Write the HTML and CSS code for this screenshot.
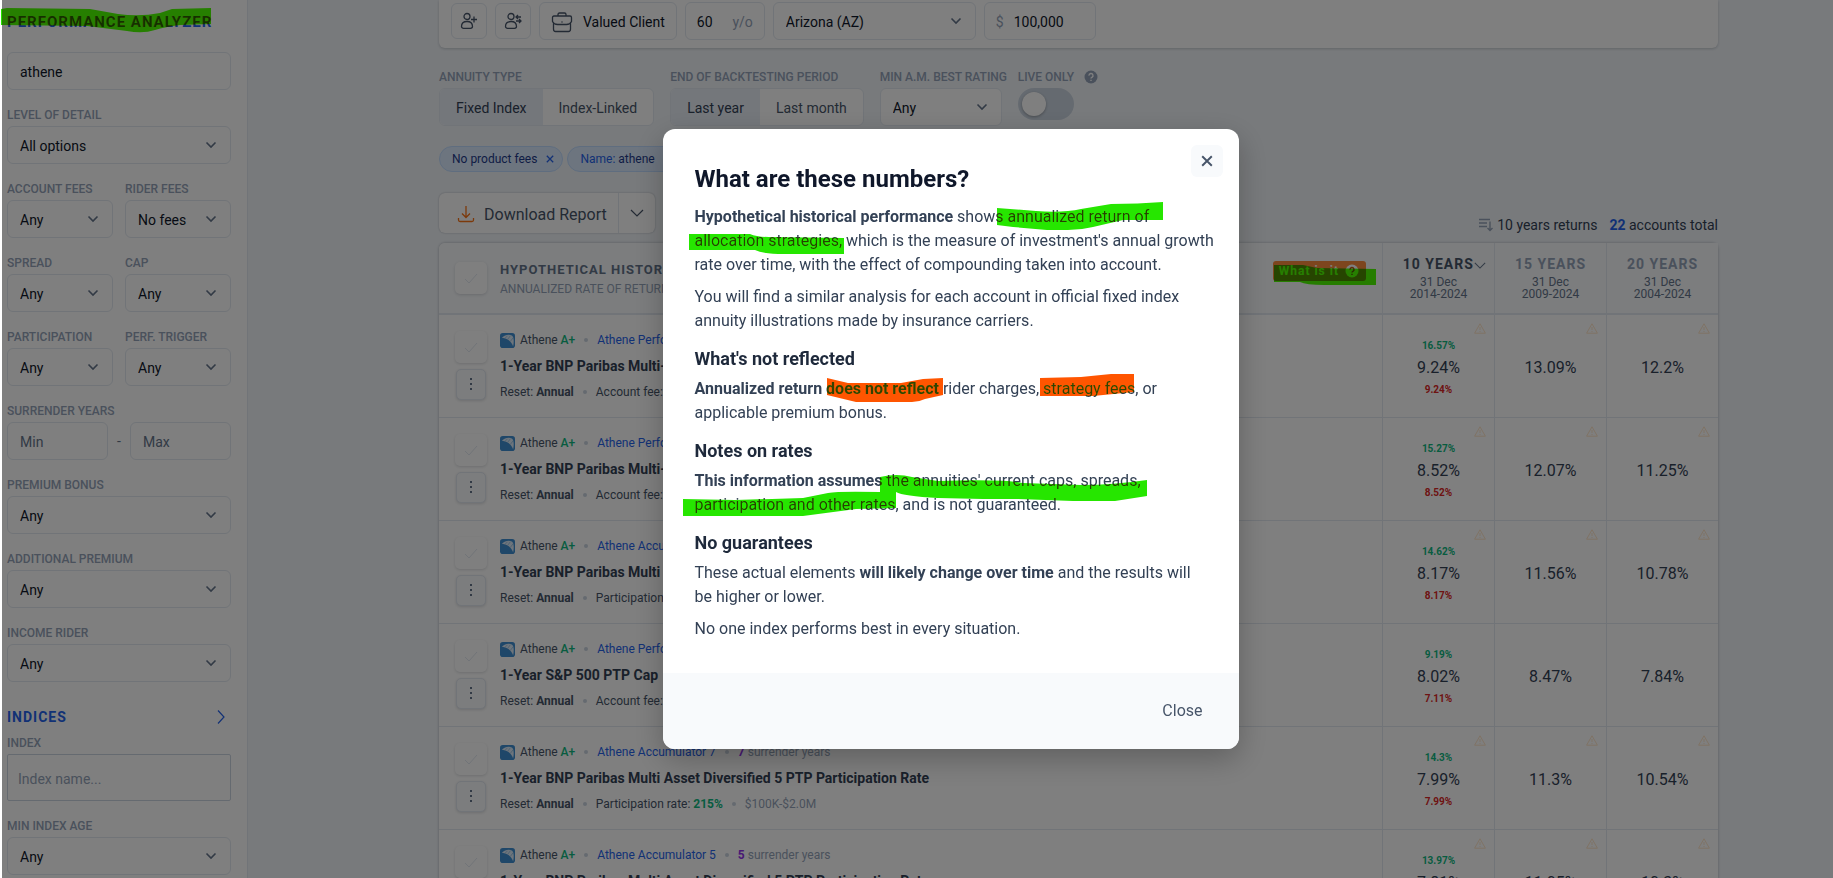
FILE: index.html
```
<!DOCTYPE html>
<html lang="en">
<head>
    <meta charset="UTF-8">
    <meta name="viewport" content="width=device-width, initial-scale=1.0">
    <title>Performance Analyzer</title>
    <link rel="stylesheet" href="styles.css">
</head>
<body>
    <svg class="sprite" aria-hidden="true">
        <symbol id="i-check" viewBox="0 0 16 16"><path d="M2 9l4 4 8-9" fill="none" stroke="currentColor"/></symbol>
        <symbol id="i-dots" viewBox="0 0 16 16"><rect x="7" y="1" width="2" height="2"/><rect x="7" y="6" width="2" height="2"/><rect x="7" y="11" width="2" height="2"/></symbol>
        <symbol id="i-x" viewBox="0 0 10 10"><path d="M1 1l8 8M9 1l-8 8" fill="none" stroke="currentColor" stroke-width="1.6"/></symbol>
        <symbol id="i-down" viewBox="0 0 14 8"><path d="M1 1l6 6 6-6" fill="none" stroke="currentColor" stroke-width="1.2"/></symbol>
        <symbol id="i-help" viewBox="0 0 14 14"><circle cx="7" cy="7" r="6.5" fill="currentColor"/><path class="help-mark" d="M5 5.6a2 2 0 1 1 2.9 1.700c-.6.3-.9.6-.9 1.200M7 9.800v1.200" fill="none" stroke-width="1.4"/></symbol>
        <symbol id="i-warn" viewBox="0 0 12 11"><path d="M6 .8L11.4 10.2H.6zM6 4v3M6 8v1" fill="none" stroke="currentColor" stroke-width=".9" stroke-linejoin="round"/></symbol>
        <symbol id="i-athene" viewBox="0 0 16 16"><rect width="16" height="16" rx="3" fill="#3f8fd2"/><path d="M2 5c3-3 8-4 11-2 2 2 2 7 1 11-2-5-5-8-12-9z" fill="#dcebf8"/><path d="M5 6l3-3M8 7l3-4M11 9l3-4" stroke="#7fb2de" stroke-width=".7"/></symbol>
    </svg>

    <div class="page">
        <aside class="sidebar">
            <h1>Performance Analyzer</h1>
            <div class="fields">
                <input type="text" value="athene" aria-label="Search">
                <div class="field">
                    <label for="detail">Level of detail</label>
                    <select id="detail"><option>All options</option></select>
                </div>
                <div class="pair">
                    <div class="field">
                        <label for="account-fees">Account fees</label>
                        <select id="account-fees"><option>Any</option></select>
                    </div>
                    <div class="field">
                        <label for="rider-fees">Rider fees</label>
                        <select id="rider-fees"><option>No fees</option></select>
                    </div>
                </div>
                <div class="pair">
                    <div class="field">
                        <label for="spread">Spread</label>
                        <select id="spread"><option>Any</option></select>
                    </div>
                    <div class="field">
                        <label for="cap">Cap</label>
                        <select id="cap"><option>Any</option></select>
                    </div>
                </div>
                <div class="pair">
                    <div class="field">
                        <label for="participation">Participation</label>
                        <select id="participation"><option>Any</option></select>
                    </div>
                    <div class="field">
                        <label for="trigger">Perf. trigger</label>
                        <select id="trigger"><option>Any</option></select>
                    </div>
                </div>
                <div class="field">
                    <label for="years-min">Surrender years</label>
                    <div class="range">
                        <input type="text" id="years-min" placeholder="Min">
                        <span>-</span>
                        <input type="text" id="years-max" placeholder="Max" aria-label="Max surrender years">
                    </div>
                </div>
                <div class="field">
                    <label for="bonus">Premium bonus</label>
                    <select id="bonus"><option>Any</option></select>
                </div>
                <div class="field">
                    <label for="additional">Additional premium</label>
                    <select id="additional"><option>Any</option></select>
                </div>
                <div class="field">
                    <label for="income">Income rider</label>
                    <select id="income"><option>Any</option></select>
                </div>
            </div>
            <h2>Indices
                <svg width="8" height="14" viewBox="0 0 8 14"><path d="M1 0.5l6 6.500-6 6.500" fill="none" stroke="currentColor" stroke-width="1.2"/></svg>
            </h2>
            <div class="fields">
                <div class="field">
                    <label for="index-name">Index</label>
                    <input type="text" id="index-name" class="index-name" placeholder="Index name...">
                </div>
                <div class="field">
                    <label for="index-age">Min index age</label>
                    <select id="index-age"><option>Any</option></select>
                </div>
            </div>
        </aside>

        <main>
            <section class="client">
                <button class="icon-btn" aria-label="Add client">
                    <svg width="18" height="18" viewBox="0 0 18 18" fill="none" stroke="currentColor" stroke-width="1.3"><circle cx="7" cy="4.500" r="3"/><path d="M1.500 14.500c0-3 2.200-5 5.500-5s5.500 2 5.500 5c0 1-1 1.800-2 1.800h-7c-1 0-2-.8-2-1.800zM14 4.500v6M11 7.500h6"/></svg>
                </button>
                <button class="icon-btn" aria-label="Switch client">
                    <svg width="18" height="18" viewBox="0 0 18 18" fill="none" stroke="currentColor" stroke-width="1.3"><circle cx="7" cy="4.500" r="3"/><path d="M1.500 14.500c0-3 2.200-5 5.500-5s5.500 2 5.500 5c0 1-1 1.800-2 1.800h-7c-1 0-2-.8-2-1.800zM17 5h-5M14 3l-2 2 2 2M12 9h5M15 7l2 2-2 2"/></svg>
                </button>
                <button class="name-btn">
                    <svg width="22" height="22" viewBox="0 0 22 22" fill="none" stroke="currentColor" stroke-width="1.300"><path d="M7 5V3.500C7 2.500 7.500 2 8.500 2h5c1 0 1.500.5 1.500 1.500V5M3 5h16c1 0 1.500.5 1.500 1.500v4c-1 2-3 3-5 3h-9c-2 0-4-1-5-3v-4C1.500 5.500 2 5 3 5zM2.500 12.500V18c0 1.500.5 2.500 2 2.500h13c1.500 0 2-1 2-2.500v-5.500M10.500 11h1"/></svg>
                    Valued Client
                </button>
                <label class="box age"><input type="text" value="60" aria-label="Age"><span>y/o</span></label>
                <select class="state" aria-label="State"><option>Arizona (AZ)</option></select>
                <label class="box amount"><span>$</span><input type="text" value="100,000" aria-label="Premium"></label>
            </section>

            <section class="filters">
                <div class="field">
                    <span class="label">Annuity type</span>
                    <div class="segment"><button class="on">Fixed Index</button><button>Index-Linked</button></div>
                </div>
                <div class="field">
                    <span class="label">End of backtesting period</span>
                    <div class="segment"><button class="on">Last year</button><button>Last month</button></div>
                </div>
                <div class="field rating">
                    <label for="rating">Min A.M. best rating</label>
                    <select id="rating"><option>Any</option></select>
                </div>
                <div class="field">
                    <label for="live" class="live-label">Live only <svg width="14" height="14"><use href="#i-help"/></svg></label>
                    <input type="checkbox" id="live" class="toggle">
                </div>
            </section>

            <section class="chips">
                <button>No product fees <svg width="8" height="8"><use href="#i-x"/></svg></button>
                <button><span><span class="key">Name:</span> athene</span> <svg width="8" height="8"><use href="#i-x"/></svg></button>
            </section>

            <section class="toolbar">
                <div class="download">
                    <button><svg width="18" height="18" viewBox="0 0 18 18" fill="none" stroke="currentColor" stroke-width="1.300"><path d="M9 1v11M5 8.500l4 4 4-4M1.500 13v2c0 1 .5 1.500 1.500 1.500h12c1 0 1.500-.5 1.500-1.500v-2"/></svg>Download Report</button>
                    <button aria-label="More formats"><svg width="14" height="8"><use href="#i-down"/></svg></button>
                </div>
                <div class="summary">
                    <span class="sorted"><svg width="14" height="14" viewBox="0 0 14 14" fill="none" stroke="currentColor" stroke-width="1.400"><path d="M0 1.500h11M0 5h8M0 8.500h8M11 3.500v9M8.500 10l2.500 2.500 2.500-2.500"/></svg>10 years returns</span>
                    <span><b>22</b> accounts total</span>
                </div>
            </section>

            <table>
                <thead>
                    <tr>
                        <th class="account">
                            <div class="head">
                                <button class="check" aria-label="Select all"><svg width="16" height="16"><use href="#i-check"/></svg></button>
                                <div class="head-text">
                                    <strong>Hypothetical historical performance</strong>
                                    <span>Annualized rate of return</span>
                                </div>
                                <button class="what">What is it <svg width="14" height="14"><use href="#i-help"/></svg></button>
                            </div>
                        </th>
                        <th class="years current"><strong>10 years <svg width="12" height="7"><use href="#i-down"/></svg></strong>31 Dec<br>2014-2024</th>
                        <th class="years"><strong>15 years</strong>31 Dec<br>2009-2024</th>
                        <th class="years"><strong>20 years</strong>31 Dec<br>2004-2024</th>
                    </tr>
                </thead>
                <tbody id="accounts"></tbody>
            </table>
        </main>
    </div>

    <div class="overlay">
        <div class="modal" role="dialog" aria-modal="true" aria-labelledby="modal-title">
            <button class="modal-x" aria-label="Close dialog"><svg width="12" height="12"><use href="#i-x"/></svg></button>
            <div class="modal-body">
                <h2 id="modal-title">What are these numbers?</h2>
                <p><b>Hypothetical historical performance</b> shows annualized return of allocation strategies, which is the measure of investment's annual growth rate over time, with the effect of compounding taken into account.</p>
                <p>You will find a similar analysis for each account in official fixed index annuity illustrations made by insurance carriers.</p>
                <h3>What's not reflected</h3>
                <p><b>Annualized return does not reflect</b> rider charges, strategy fees, or applicable premium bonus.</p>
                <h3>Notes on rates</h3>
                <p><b>This information assumes</b> the annuities' current caps, spreads, participation and other rates, and is not guaranteed.</p>
                <h3>No guarantees</h3>
                <p>These actual elements <b>will likely change over time</b> and the results will<br>be higher or lower.</p>
                <p>No one index performs best in every situation.</p>
            </div>
            <div class="modal-footer"><button>Close</button></div>
            <!-- marker strokes over the key phrases -->
            <svg class="marks" width="576" height="620" viewBox="0 0 576 620">
                <g class="green">
                    <path d="M334 79L373 82Q400 84 418 80L448 75Q475 75 500 73V91H460L430 98Q418 101 405 101H384L350 98 334 96z"/>
                    <path d="M26 105H87Q94 108 106 108L181 109V125H121Q100 125 92 121H26z"/>
                    <path d="M217 348Q234 344 249 348L275 352Q340 350 360 354L418 356Q450 356 484 351V367L452 372H410L354 370H320L275 369Q240 367 233 363V379L193 380 140 387H20V370L72 371 140 369 165 364Q175 362 217 363z"/>
                </g>
                <g class="orange">
                    <path d="M164 249L185 254H238L260 250 280 249V266L262 270Q256 273 249 273H193L164 266z"/>
                    <path d="M377 249L418 248 448 245H471V263L430 267H377z"/>
                </g>
            </svg>
        </div>
    </div>
    <svg class="marks mark-title" width="214" height="34" viewBox="0 0 214 34"><path class="green" d="M1 9L7 8 90 9 118 14Q140 17 160 13L172 9 211 8V24L180 25Q165 27 155 30 143 34 127 31L87 26 1 25z"/></svg>
    <svg class="marks mark-what" width="102" height="20" viewBox="0 0 102 20"><path class="green" d="M0 0H29L43 3 102 4V20H50Q32 20 26 17H0z"/></svg>

    <script>
        const accounts = [
            { product: "Athene Performance Elite 10", years: 10, name: "1-Year BNP Paribas Multi-Asset Diversified 5 PTP Participation Rate", detail: "Account fee:", rate: "1.5%", high: "16.57%", ten: "9.24%", low: "9.24%", fifteen: "13.09%", twenty: "12.2%" },
            { product: "Athene Performance Elite 7", years: 7, name: "1-Year BNP Paribas Multi-Asset Diversified 5 PTP Participation Rate", detail: "Account fee:", rate: "1.5%", high: "15.27%", ten: "8.52%", low: "8.52%", fifteen: "12.07%", twenty: "11.25%" },
            { product: "Athene Accumulator 10", years: 10, name: "1-Year BNP Paribas Multi Asset Diversified 5 PTP Participation Rate", detail: "Participation rate:", rate: "220%", high: "14.62%", ten: "8.17%", low: "8.17%", fifteen: "11.56%", twenty: "10.78%" },
            { product: "Athene Performance Elite 10", years: 10, name: "1-Year S&amp;P 500 PTP Cap", detail: "Account fee:", rate: "1.5%", high: "9.19%", ten: "8.02%", low: "7.11%", fifteen: "8.47%", twenty: "7.84%", complete: true },
            { product: "Athene Accumulator 7", years: 7, name: "1-Year BNP Paribas Multi Asset Diversified 5 PTP Participation Rate", detail: "Participation rate:", rate: "215%", high: "14.3%", ten: "7.99%", low: "7.99%", fifteen: "11.3%", twenty: "10.54%" },
            { product: "Athene Accumulator 5", years: 5, name: "1-Year BNP Paribas Multi Asset Diversified 5 PTP Participation Rate", detail: "Participation rate:", rate: "210%", high: "13.97%", ten: "7.81%", low: "7.81%", fifteen: "11.05%", twenty: "10.3%" }
        ];

        document.getElementById("accounts").innerHTML = accounts.map(a => {
            const warn = a.complete ? "" : `<svg class="warn" width="12" height="11"><use href="#i-warn"/></svg>`;
            return `
                <tr>
                    <td class="account">
                        <div class="row">
                            <div class="row-btns">
                                <button class="check" aria-label="Select"><svg width="16" height="16"><use href="#i-check"/></svg></button>
                                <button class="more" aria-label="More"><svg width="16" height="16"><use href="#i-dots"/></svg></button>
                            </div>
                            <div class="row-text">
                                <div class="meta"><svg width="15" height="15"><use href="#i-athene"/></svg><span>Athene <span class="grade">A+</span></span><i></i><a href="#">${a.product}</a><i></i><span class="muted"><b>${a.years}</b> surrender years</span></div>
                                <h4>${a.name}</h4>
                                <div class="meta terms"><span>Reset: <b>Annual</b></span><i></i><span>${a.detail} <b class="rate">${a.rate}</b></span><i></i><span class="muted">$100K-$2.0M</span></div>
                            </div>
                        </div>
                    </td>
                    <td class="value">${warn}<small class="high">${a.high}</small>${a.ten}<small class="low">${a.low}</small></td>
                    <td class="value">${warn}${a.fifteen}</td>
                    <td class="value">${warn}${a.twenty}</td>
                </tr>`;
        }).join("");
    </script>
</body>
</html>
```

FILE: styles.css
```
* {
    box-sizing: border-box;
}
body {
    margin: 0;
    height: 100vh;
    overflow: hidden;
    font-family: Roboto, sans-serif;
    font-size: 14px;
    color: #334155;
    background: white;
}
h1, h2, h3, h4, p {
    margin: 0;
}
button, input, select {
    font: inherit;
    color: inherit;
    margin: 0;
}
button {
    display: flex;
    align-items: center;
    justify-content: center;
    padding: 0;
    border: none;
    background: none;
    cursor: pointer;
}
svg {
    flex: none;
}
.sprite {
    position: absolute;
    width: 0;
    height: 0;
}
.help-mark {
    stroke: var(--mark, white);
}
.page {
    display: flex;
    height: 100vh;
    margin-left: 2px;
    overflow: hidden;
    background: #f1f5f9;
}

/* sidebar */
.sidebar {
    width: 246px;
    flex: none;
    padding: 10px 16px 0 5px;
    background: white;
    border-right: 1px solid #e2e8f0;
}
.sidebar h1, .sidebar h2 {
    font-size: 15px;
    line-height: 24px;
    font-weight: 700;
    letter-spacing: 1px;
    text-transform: uppercase;
    white-space: nowrap;
    color: #2563eb;
}
.sidebar h1 {
    margin-bottom: 18px;
}
.sidebar h2 {
    display: flex;
    justify-content: space-between;
    align-items: center;
    margin: 23px 0 5px;
    padding-right: 6px;
    font-size: 14px;
}
.fields {
    display: flex;
    flex-direction: column;
    gap: 16px;
}
.field {
    display: flex;
    flex-direction: column;
    gap: 2px;
    min-width: 0;
}
.field label, .label {
    font-size: 12px;
    line-height: 18px;
    font-weight: 500;
    text-transform: uppercase;
    white-space: nowrap;
    color: #94a3b8;
}
.pair {
    display: grid;
    grid-template-columns: 1fr 1fr;
    gap: 12px;
}
input[type="text"], select {
    width: 100%;
    height: 38px;
    padding: 2px 12px 0;
    border: 1px solid #e2e8f0;
    border-radius: 6px;
    background: white;
    color: #0f172a;
}
select {
    appearance: none;
    background: white url("data:image/svg+xml,%3Csvg xmlns='http://www.w3.org/2000/svg' width='12' height='8' viewBox='0 0 12 8'%3E%3Cpath d='M1.500 1.500L6 6l4.500-4.500' fill='none' stroke='%2364748b' stroke-width='1.600'/%3E%3C/svg%3E") no-repeat right 13px center;
}
input::placeholder {
    color: #64748b;
}
.range {
    display: flex;
}
.range span {
    width: 22px;
    flex: none;
    text-align: center;
    line-height: 38px;
    color: #64748b;
}
input[type="text"].index-name {
    height: 47px;
    padding: 2px 10px 0;
    border-color: #cbd5e1;
    border-radius: 2px;
}
.index-name::placeholder {
    color: #94a3b8;
}

/* main column */
main {
    flex: 1;
    min-width: 0;
    padding: 0 115px 0 191px;
}
.client {
    display: flex;
    align-items: center;
    gap: 8px;
    height: 48px;
    padding: 2px 12px 8px;
    background: white;
    border-radius: 0 0 6px 6px;
    box-shadow: 0 1px 3px rgba(15, 23, 42, 0.2);
}
.icon-btn, .name-btn, .box {
    height: 38px;
    border: 1px solid #e2e8f0;
    border-radius: 6px;
    color: #475569;
}
.icon-btn {
    width: 36px;
    height: 36px;
}
.name-btn {
    gap: 10px;
    padding: 2px 11px 0;
    color: #0f172a;
}
.name-btn svg {
    color: #475569;
}
.box {
    display: flex;
    align-items: center;
    gap: 8px;
    padding: 2px 11px 0;
    color: #94a3b8;
}
.box input[type="text"] {
    height: 34px;
    padding: 0;
    border: none;
}
.age {
    width: 80px;
}
.client .state {
    width: 203px;
}
.amount {
    gap: 10px;
    width: 112px;
}
.filters {
    display: flex;
    gap: 16px;
    margin-top: 20px;
}
.segment {
    display: flex;
    height: 38px;
    border: 1px solid #e2e8f0;
    border-radius: 6px;
    background: white;
    overflow: hidden;
}
.segment button {
    flex: auto;
    padding: 2px 16px 0;
    color: #475569;
}
.segment .on {
    background: #e8eef7;
    color: #334155;
}
.rating {
    width: 122px;
}
.filters .live-label {
    display: flex;
    align-items: center;
    gap: 10px;
}
.toggle {
    appearance: none;
    width: 56px;
    height: 32px;
    padding: 4px;
    border-radius: 16px;
    background: #cbd5e1;
}
.toggle::before {
    content: "";
    display: block;
    width: 24px;
    height: 24px;
    border-radius: 50%;
    background: white;
    box-shadow: 0 1px 3px rgba(0, 0, 0, 0.3);
}
.chips {
    display: flex;
    gap: 4px;
    margin-top: 20px;
}
.chips button {
    gap: 9px;
    height: 26px;
    padding: 0 8px 0 12px;
    border: 1px solid #bfdbfe;
    border-radius: 13px;
    background: #dbeafe;
    font-size: 12px;
    color: #1e3a8a;
}
.chips .key, .chips svg {
    color: #2563eb;
}
.toolbar {
    display: flex;
    justify-content: space-between;
    align-items: flex-end;
    margin: 21px 0 10px;
}
.download {
    display: flex;
    border-radius: 6px;
    background: white;
    box-shadow: 0 0 2px rgba(15, 23, 42, 0.3);
    font-size: 16px;
    color: #475569;
}
.download button {
    gap: 9px;
    height: 40px;
    padding: 2px 11px 0 18px;
}
.download button + button {
    padding: 0 11px;
    border-left: 1px solid #e2e8f0;
}
.download button:first-child svg {
    color: #f97316;
}
.summary {
    display: flex;
    gap: 12px;
    line-height: 16px;
}
.summary b {
    color: #2563eb;
}
.sorted {
    display: flex;
    align-items: center;
    gap: 4px;
}
.sorted svg {
    color: #94a3b8;
}

/* accounts table */
table {
    width: 100%;
    border-collapse: separate;
    border-spacing: 0;
    table-layout: fixed;
    background: white;
    border-radius: 6px;
    box-shadow: 0 0 3px rgba(15, 23, 42, 0.3);
}
th {
    height: 72px;
    padding: 0;
    background: #f8fafc;
    border-bottom: 2px solid #e2e8f0;
    font-weight: 400;
}
th.account {
    text-align: left;
    border-top-left-radius: 6px;
}
.head {
    display: flex;
    align-items: center;
    padding: 0 16px;
}
.check, .more {
    width: 32px;
    height: 32px;
    border-radius: 5px;
    background: white;
    box-shadow: 0 1px 3px rgba(15, 23, 42, 0.15);
    color: #e2e8f0;
}
.more {
    width: 30px;
    height: 31px;
    border: 1px solid #e2e8f0;
    background: #f8fafc;
    color: #64748b;
    fill: #64748b;
}
.head-text {
    flex: 1;
    margin-left: 13px;
    padding-top: 3px;
    text-transform: uppercase;
    line-height: 18px;
}
.head-text strong {
    display: block;
    font-size: 13px;
    letter-spacing: 1px;
    color: #64748b;
}
.head-text span {
    font-size: 12px;
    color: #94a3b8;
}
.what {
    --mark: #c2560c;
    gap: 6px;
    height: 20px;
    margin-bottom: 14px;
    padding: 0 7px 0 6px;
    border-radius: 3px;
    background: #fb8b3c;
    font-size: 12px;
    font-weight: 700;
    letter-spacing: 1px;
    color: white;
}
.years {
    width: 112px;
    padding-bottom: 4px;
    border-left: 1px solid #e2e8f0;
    font-size: 12px;
    line-height: 12px;
    color: #64748b;
}
.years strong {
    display: block;
    font-size: 14px;
    line-height: 24px;
    letter-spacing: 1px;
    text-transform: uppercase;
    color: #94a3b8;
}
.years.current strong {
    color: #475569;
}
.years strong svg {
    margin-left: -4px;
    margin-right: -12px;
    color: #64748b;
}
td {
    position: relative;
    height: 103px;
    padding: 0;
    border-bottom: 1px solid #e2e8f0;
}
.row {
    display: flex;
    gap: 13px;
    padding: 0 16px;
}
.row-btns {
    display: flex;
    flex-direction: column;
    align-items: center;
    gap: 6px;
}
.row-text {
    min-width: 0;
    white-space: nowrap;
}
.row-text h4 {
    margin: 8px 0;
    font-size: 14px;
    line-height: 18px;
    color: #334155;
}
.meta {
    display: flex;
    align-items: center;
    height: 18px;
    font-size: 12px;
    color: #475569;
}
.meta svg {
    margin-right: 5px;
}
.meta i {
    width: 4px;
    height: 4px;
    margin: 0 9px;
    border-radius: 50%;
    background: #cbd5e1;
}
.meta a {
    color: #2563eb;
    text-decoration: none;
}
.meta .grade, .meta .rate {
    font-weight: 700;
    color: #10b981;
}
.meta .grade {
    font-weight: 500;
}
.meta .muted {
    color: #94a3b8;
}
.muted b {
    color: #9333ea;
}
.value {
    padding-top: 3px;
    border-left: 1px solid #e2e8f0;
    text-align: center;
    font-size: 16px;
    line-height: 22px;
}
.value small {
    display: block;
    font-size: 10px;
    font-weight: 700;
}
.high {
    color: #10b981;
}
.low {
    color: #dc2626;
}
.warn {
    position: absolute;
    top: 8px;
    right: 8px;
    color: #fed7aa;
    opacity: 0.7;
}

/* dialog */
.overlay {
    position: fixed;
    inset: 0 0 0 2px;
    display: flex;
    align-items: center;
    justify-content: center;
    padding-left: 66px;
    background: rgba(0, 0, 0, 0.5);
}
.modal {
    position: relative;
    width: 576px;
    border-radius: 12px;
    background: white;
    box-shadow: 0 10px 30px rgba(0, 0, 0, 0.25);
}
.modal-x {
    position: absolute;
    top: 16px;
    right: 16px;
    width: 32px;
    height: 32px;
    border-radius: 6px;
    background: #f8fafc;
    color: #475569;
}
.modal-body {
    padding: 32px 24px 32px 32px;
    font-size: 16px;
    line-height: 24px;
}
.modal-body h2 {
    margin-bottom: 8px;
    font-size: 24px;
    line-height: 36px;
    color: #0f172a;
}
.modal-body h3 {
    margin: 12px 0 4px;
    font-size: 18px;
    line-height: 28px;
    color: #1e293b;
}
.modal-body p + p {
    margin-top: 8px;
}
.modal-footer {
    display: flex;
    justify-content: flex-end;
    padding: 24px 36px 24px 32px;
    border-radius: 0 0 12px 12px;
    background: #f8fafc;
    font-size: 16px;
    line-height: 28px;
}
.modal-footer button {
    color: #475569;
}

/* marker strokes */
.marks {
    position: absolute;
    top: 0;
    left: 0;
    pointer-events: none;
    mix-blend-mode: darken;
}
.mark-what {
    top: 265px;
    left: auto;
    right: 457px;
}
.green {
    fill: #26e600;
}
.orange {
    fill: #ff5500;
}
```
